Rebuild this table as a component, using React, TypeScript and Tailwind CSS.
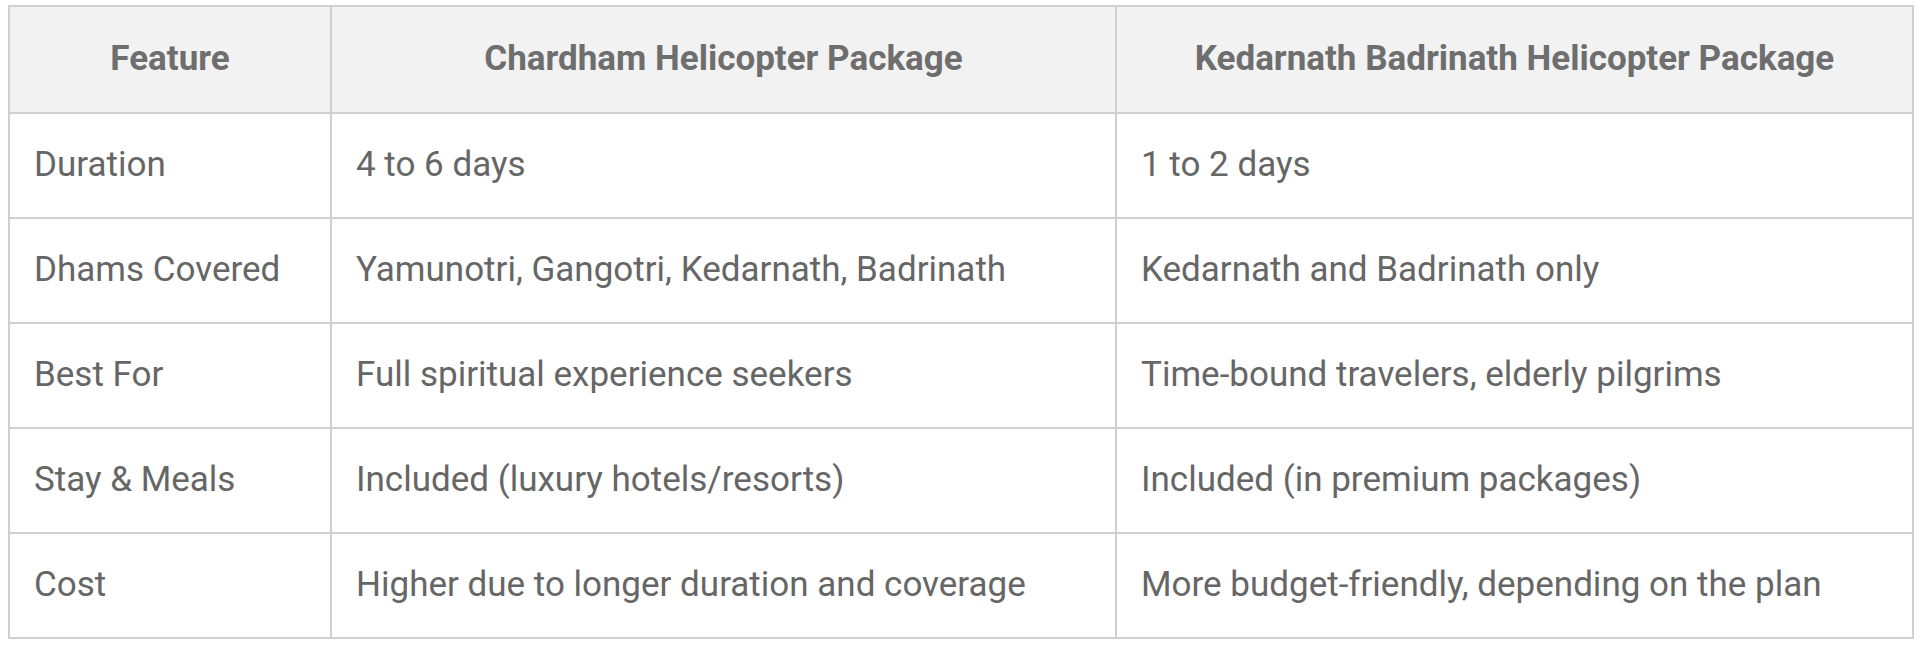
export default function App() {
  const rows = [
    ["Duration", "4 to 6 days", "1 to 2 days"],
    ["Dhams Covered", "Yamunotri, Gangotri, Kedarnath, Badrinath", "Kedarnath and Badrinath only"],
    ["Best For", "Full spiritual experience seekers", "Time-bound travelers, elderly pilgrims"],
    ["Stay & Meals", "Included (luxury hotels/resorts)", "Included (in premium packages)"],
    ["Cost", "Higher due to longer duration and coverage", "More budget-friendly, depending on the plan"],
  ]

  return (
    <div className="w-[1920px] h-[647px] bg-white pl-[8px] pt-[5px] font-['Roboto',sans-serif]">
      <table className="w-[1904px] table-fixed border-collapse border-2 border-[#d0d0d0] text-[35px]">
        <colgroup>
          <col className="w-[322px]" />
          <col className="w-[785px]" />
          <col className="w-[797px]" />
        </colgroup>
        <thead>
          <tr className="h-[107px] bg-[#f2f2f2]">
            <th className="border-2 border-[#d0d0d0] font-bold text-center text-[#6e6e6e]">Feature</th>
            <th className="border-2 border-[#d0d0d0] font-bold text-center text-[#6e6e6e]">Chardham Helicopter Package</th>
            <th className="border-2 border-[#d0d0d0] font-bold text-center text-[#6e6e6e]">Kedarnath Badrinath Helicopter Package</th>
          </tr>
        </thead>
        <tbody>
          {rows.map((r) => (
            <tr key={r[0]} className="h-[105px]">
              {r.map((c, i) => (
                <td key={i} className="border-2 border-[#d0d0d0] px-[24px] text-left text-[#666666]">
                  {c}
                </td>
              ))}
            </tr>
          ))}
        </tbody>
      </table>
    </div>
  )
}
